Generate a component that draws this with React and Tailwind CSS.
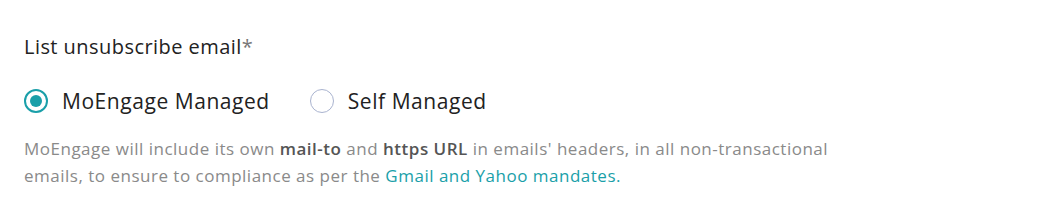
import React, { useState } from "react";

function Radio({ checked, label, onClick }) {
  return (
    <button type="button" onClick={onClick} className="flex h-[28px] items-center gap-[14px]">
      <span
        className={
          checked
            ? "flex h-[24px] w-[24px] items-center justify-center rounded-full border-2 border-[#1a9fa9] bg-white"
            : "flex h-[24px] w-[24px] items-center justify-center rounded-full border border-[#a9b3cf] bg-white"
        }
      >
        {checked && <span className="h-[12px] w-[12px] rounded-full bg-[#1a9fa9]" />}
      </span>
      <span className="text-[21px] leading-[28px] tracking-[0.55px] text-[#222]">{label}</span>
    </button>
  );
}

export default function App() {
  const [mode, setMode] = useState("moengage");

  return (
    <div className="h-[216px] w-full bg-white px-6 pt-[35px] font-['Open_Sans',sans-serif]">
      <div className="text-[20px] leading-[24px] tracking-[0.45px] text-[#222]">
        List unsubscribe email<span className="text-[#777]">*</span>
      </div>
      <div className="mt-[28px] flex items-center gap-[40px]">
        <Radio checked={mode === "moengage"} label="MoEngage Managed" onClick={() => setMode("moengage")} />
        <Radio checked={mode === "self"} label="Self Managed" onClick={() => setMode("self")} />
      </div>
      <p className="mt-[20px] text-[17px] leading-[27px] tracking-[0.5px] text-[#8a8a8a]">
        MoEngage will include its own <b className="font-semibold text-[#555]">mail-to</b> and{" "}
        <b className="font-semibold text-[#555]">https URL</b> in emails' headers, in all non-transactional
        <br />
        emails, to ensure to compliance as per the{" "}
        <a href="#" className="text-[#1a9fa9]">
          Gmail and Yahoo mandates.
        </a>
      </p>
    </div>
  );
}
